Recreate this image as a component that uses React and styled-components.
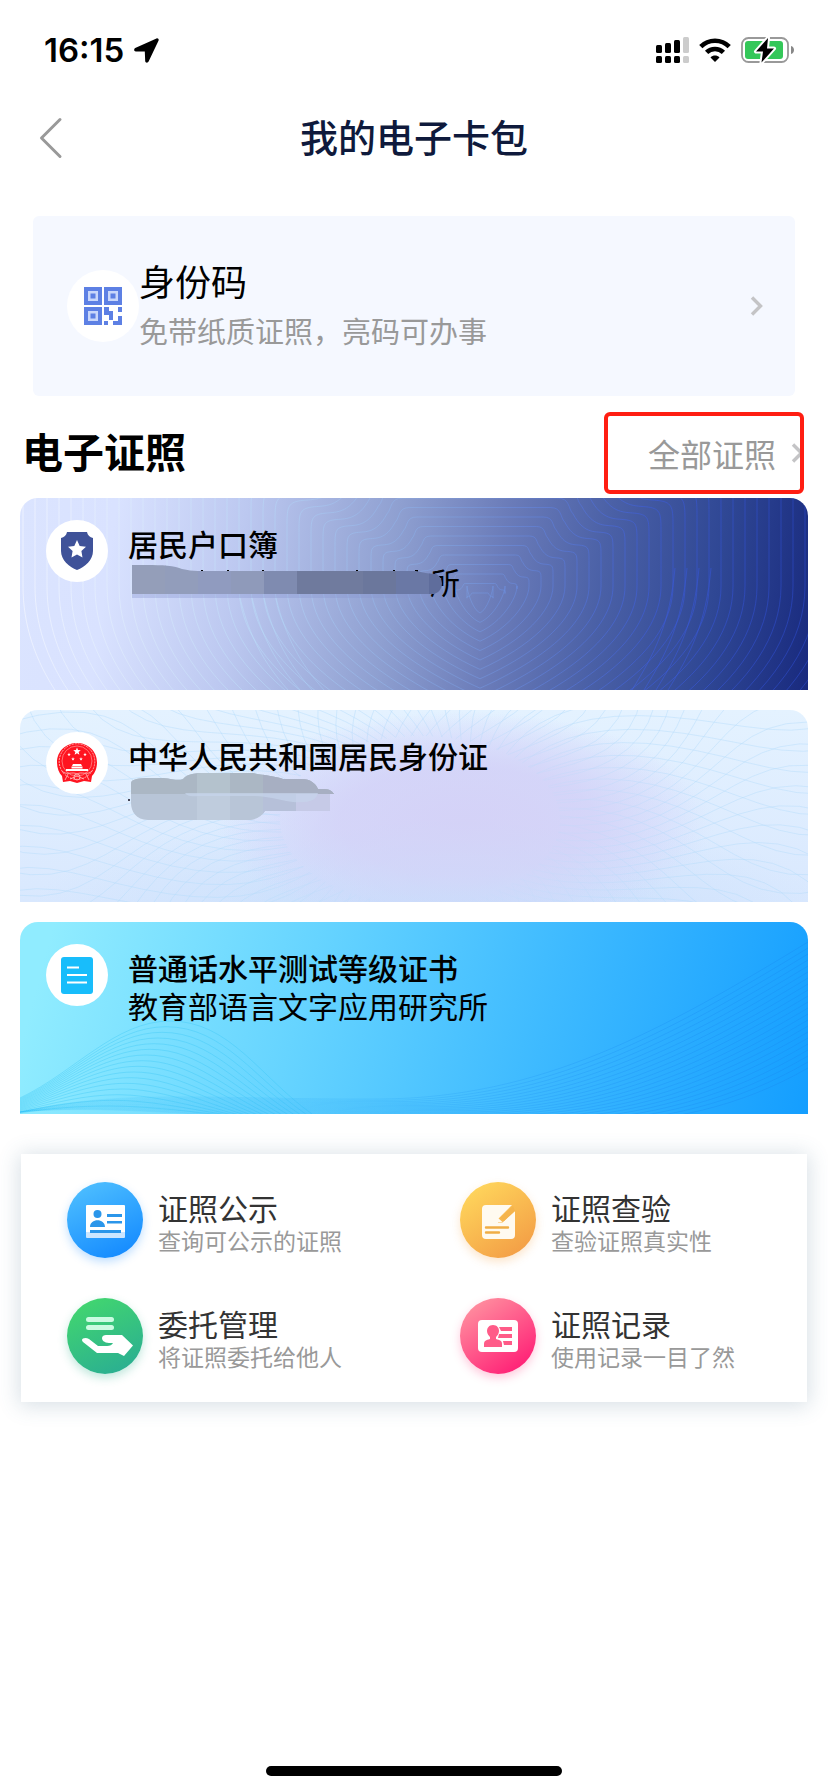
import React from "react";
import styled, { createGlobalStyle } from "styled-components";

const GlobalStyle = createGlobalStyle`
  * { box-sizing: border-box; }
  body {
    margin: 0;
    background: #fff;
    color: #000;
    font-family: "Noto Sans CJK SC", "Liberation Sans", sans-serif;
  }
  h1, h2, h3, p { margin: 0; }
  a { color: inherit; text-decoration: none; }
`;

const Screen = styled.div`
  display: flex;
  flex-direction: column;
  min-height: 100vh;
`;

const StatusBar = styled.header`
  display: flex;
  align-items: center;
  justify-content: space-between;
  height: 92px;
  padding: 8px 34px 0 44px;
`;

const StatusGroup = styled.div`
  display: flex;
  align-items: center;
  gap: 10px;
`;

const Clock = styled.time`
  font: 600 33px/40px Inter, "Liberation Sans", sans-serif;
`;

const NavBar = styled.nav`
  display: grid;
  grid-template-columns: 64px 1fr 64px;
  align-items: center;
  height: 92px;
  padding: 0 24px;
`;

const BackButton = styled.button`
  display: flex;
  align-items: center;
  height: 64px;
  padding: 0 0 0 15px;
  border: 0;
  background: none;
  cursor: pointer;
`;

const PageTitle = styled.h1`
  padding-bottom: 4px;
  color: #0f1a3c;
  font-size: 38px;
  font-weight: 500;
  line-height: 52px;
  text-align: center;
`;

const CodeCard = styled.a`
  display: flex;
  align-items: center;
  min-height: 180px;
  margin: 32px 33px 0;
  padding: 0 32px 0 34px;
  border-radius: 6px;
  background: #f5f8ff;
`;

const RoundIcon = styled.span`
  display: flex;
  flex: none;
  align-items: center;
  justify-content: center;
  width: ${(p) => p.$size}px;
  height: ${(p) => p.$size}px;
  border-radius: 50%;
  background: #fff;
`;

const CodeText = styled.div`
  flex: 1;
  padding-bottom: 2px;
`;

const CodeTitle = styled.h2`
  font-size: 36px;
  font-weight: 400;
  line-height: 50px;
`;

const CodeHint = styled.p`
  color: #999;
  font-size: 29px;
  line-height: 50px;
`;

const SectionHead = styled.div`
  display: flex;
  align-items: center;
  justify-content: space-between;
  padding: 16px 24px 4px 22px;
`;

const SectionTitle = styled.h2`
  padding-bottom: 6px;
  font-size: 41px;
  font-weight: 700;
  line-height: 60px;
`;

const AllLink = styled.a`
  display: flex;
  align-items: center;
  gap: 15px;
  width: 200px;
  height: 82px;
  padding-left: 40px;
  overflow: hidden;
  border: 4px solid #ff1e12;
  border-radius: 6px;
  color: #999;
  font-size: 32px;
  line-height: 44px;
  white-space: nowrap;

  svg { flex: none; }
`;

const CardList = styled.main`
  display: flex;
  flex-direction: column;
  gap: 20px;
  padding: 0 20px;
`;

const LicenseCard = styled.a`
  position: relative;
  display: flex;
  align-items: flex-start;
  gap: 20px;
  min-height: 192px;
  padding: 22px 26px;
  overflow: hidden;
  border-radius: 18px 18px 0 0;
  background: ${(p) => p.$background};
`;

const Backdrop = styled.svg`
  position: absolute;
  inset: 0;
  width: 100%;
  height: 100%;
`;

const CardIcon = styled(RoundIcon)`
  position: relative;
`;

const CardText = styled.div`
  position: relative;
  padding-top: 4px;
`;

const CardTitle = styled.h3`
  font-size: 30px;
  font-weight: 500;
  line-height: 38px;
`;

const CardIssuer = styled.p`
  min-height: 38px;
  padding-left: ${(p) => p.$hidden || 0}px;
  font-size: 30px;
  line-height: 38px;
`;

const Redaction = styled.svg`
  position: absolute;
  top: 41px;
  left: 0;
`;

const ServicePanel = styled.section`
  display: grid;
  grid-template-columns: 1fr 1fr;
  row-gap: 40px;
  margin: 40px 21px 0;
  padding: 28px 0;
  background: #fff;
  box-shadow: 0 2px 20px 2px rgba(60, 100, 130, 0.2);
`;

const Service = styled.a`
  display: flex;
  align-items: center;
  gap: 15px;
  padding-left: 46px;
`;

const ServiceIcon = styled.span`
  width: 76px;
  height: 76px;
  border-radius: 50%;
  background: ${(p) => p.$background};
  box-shadow: 0 4px 10px ${(p) => p.$glow};
`;

const ServiceText = styled.div`
  padding-top: 4px;
`;

const ServiceTitle = styled.h3`
  color: #333;
  font-size: 30px;
  font-weight: 400;
  line-height: 36px;
`;

const ServiceHint = styled.p`
  color: #999;
  font-size: 23px;
  line-height: 30px;
`;

const HomeBar = styled.div`
  width: 296px;
  height: 10px;
  margin: auto auto 16px;
  border-radius: 5px;
  background: #000;
`;

const LocationArrow = () => (
  <svg width="25" height="25" viewBox="0 0 25 25" aria-hidden="true">
    <path d="M22.500 .4 1.200 10C-.5 10.900 0 13.300 1.800 13.400L10.800 13.600 11.200 23C11.300 25 13.800 25.300 14.600 23.600L24.600 2.400C25 1.200 24 -.1 22.500 .4Z" />
  </svg>
);

const Signal = () => (
  <svg width="33" height="26" viewBox="0 0 33 26" aria-hidden="true">
    {[8, 10, 13, 16].map((h, i) => (
      <g key={h} fill={i === 3 ? "#ccc" : "#000"}>
        <rect x={i * 9} y={16 - h} width="6" height={h} rx="1.500" />
        <rect x={i * 9} y="19" width="6" height="7" rx="1.500" />
      </g>
    ))}
  </svg>
);

const Wifi = () => (
  <svg width="32" height="24" viewBox="0 0 32 24" aria-hidden="true">
    <g fill="none" stroke="#000" strokeWidth="4.600">
      <path d="M1.800 8.600C9.600 .7 22.400 .7 30.200 8.600" />
      <path d="M7.600 14.400C12.200 9.800 19.800 9.800 24.400 14.400" />
    </g>
    <path d="M16 24 11.500 19.400C14 17 18 17 20.500 19.400Z" />
  </svg>
);

const Battery = () => (
  <svg width="53" height="26" viewBox="0 0 53 26" aria-hidden="true">
    <rect x="1" y="1" width="46" height="24" rx="6.500" fill="none" stroke="#999" strokeWidth="1.800" />
    <rect x="4" y="4" width="38" height="18" rx="3" fill="#34c759" />
    <path d="M50 9C54 10 54 16 50 17Z" fill="#888" />
    <path d="M27 1 15 14.500H22L20.500 25.500 33 11.500H26Z" stroke="#fff" strokeWidth="4" strokeLinejoin="round" />
    <path d="M27 1 15 14.500H22L20.500 25.500 33 11.500H26Z" />
  </svg>
);

const Chevron = () => (
  <svg width="13" height="20" viewBox="0 0 13 20" fill="none" aria-hidden="true">
    <path d="M2 1.500 10.500 10 2 18.500" stroke="#c4c4c6" strokeWidth="3.400" />
  </svg>
);

const QrIcon = () => (
  <svg width="38" height="38" viewBox="0 0 38 38" aria-hidden="true">
    {[[0, 0], [20, 0], [0, 20]].map(([x, y]) => (
      <g key={`${x}-${y}`} transform={`translate(${x} ${y})`}>
        <rect width="18" height="18" fill="#5d80e4" />
        <rect x="4" y="4" width="10" height="10" fill="#c9d7fb" />
        <rect x="6.500" y="6.500" width="5" height="5" fill="#5d80e4" />
      </g>
    ))}
    <path fill="#5d80e4" d="M20 20h5v4h4v9h-4v-5h-5zM34 20h4v5h-4zM20 34h4v4h-4zM34 29h4v9h-9v-4h5z" />
  </svg>
);

const ShieldIcon = () => (
  <svg width="32" height="38" viewBox="0 0 32 38" aria-hidden="true">
    <path fill="#3f5299" d="M6 0H26C26.500 3 29 5.500 32 6V19C32 28 24 35 16 38 8 35 0 28 0 19V6C3 5.500 5.500 3 6 0Z" />
    <path fill="#fff" d="m16 8 2.700 5.900 6.300.8-4.600 4.400 1.100 6.400L16 22.400l-5.500 3.100 1.100-6.400L7 14.700l6.300-.8z" />
  </svg>
);

const star = (cx, cy, r) =>
  Array.from({ length: 10 }, (_, i) => {
    const a = (Math.PI * i) / 5 - Math.PI / 2;
    const d = i % 2 ? r * 0.42 : r;
    return `${(cx + d * Math.cos(a)).toFixed(1)},${(cy + d * Math.sin(a)).toFixed(1)}`;
  }).join(" ");

const EmblemIcon = () => (
  <svg width="40" height="40" viewBox="0 0 40 40" aria-hidden="true">
    <path fill="#ff1420" d="M20 0C31 0 40 8 40 19.500 40 25 38 30 35 33L34 39 27 38 20 40 13 38 6 39 5 33C2 30 0 25 0 19.500 0 8 9 0 20 0Z" />
    <circle cx="20" cy="18.500" r="17.800" fill="none" stroke="#ffb0b0" strokeWidth="1" strokeDasharray="2 1" />
    <circle cx="20" cy="18" r="15" fill="none" stroke="#ff9c9c" strokeWidth=".7" />
    <g fill="#fff">
      <polygon points={star(20, 8.500, 4)} />
      <polygon points={star(12, 11.500, 1.900)} />
      <polygon points={star(28, 11.500, 1.900)} />
      <polygon points={star(16, 16, 1.900)} />
      <polygon points={star(24, 16, 1.900)} />
      <path d="M16 21h8l1 2H15zM14.500 23.500h11v2h-11zM9 26h22v2H9z" />
    </g>
    <g fill="none" stroke="#ffc0c0" strokeWidth=".8">
      <path d="M5 28C10 33 15 28 20 31 25 28 30 33 35 28M8 37 11 31M32 37 29 31M13 36 20 33 27 36" />
      <circle cx="20" cy="34" r="3" />
    </g>
  </svg>
);

const DocumentIcon = () => (
  <svg width="32" height="37" viewBox="0 0 32 37" aria-hidden="true">
    <rect width="32" height="37" rx="3" fill="#18bdfb" />
    <path d="M6 10.500H18M6 18H26M6 25.500H26" stroke="#fff" strokeWidth="2" />
  </svg>
);

const ringPath = (k) => {
  const w = 13 + 12 * k;
  const t = 95 - 9.500 * k;
  const b = 115 + 9.400 * k;
  const cx = 460;
  const half = (s) => [
    `${cx + s * w * 0.58} ${t}`,
    `${cx + s * w * 0.68} ${t} ${cx + s * w * 0.66} ${t + w * 0.08} ${cx + s * w * 0.7} ${t + w * 0.12}`,
    `${cx + s * w * 0.78} ${t + w * 0.27} ${cx + s * w * 0.86} ${t + w * 0.25} ${cx + s * w * 0.93} ${t + w * 0.26}`,
    `${cx + s * w} ${t + w * 0.27} ${cx + s * w} ${t + w * 0.3} ${cx + s * w} ${t + w * 0.4}`,
    `${cx + s * w} ${88 + w * 0.34} ${cx + s * w * 0.58} ${b - w * 0.26} ${cx} ${b}`,
  ];
  return [1, -1]
    .map((s) => {
      const [p0, c1, c2, c3, c4] = half(s);
      return `M${cx} ${t}L${p0}C${c1}C${c2}C${c3}L${cx + s * w} 88C${c4}`;
    })
    .join("");
};

const Contours = () => (
  <Backdrop viewBox="0 0 788 192" preserveAspectRatio="none" aria-hidden="true">
    <defs>
      <linearGradient id="contour" gradientUnits="userSpaceOnUse" x1="0" x2="788" y1="0" y2="0">
        <stop offset="0" stopColor="#fff" stopOpacity=".5" />
        <stop offset=".3" stopColor="#b9daf8" stopOpacity=".6" />
        <stop offset=".55" stopColor="#7ea4e6" stopOpacity=".5" />
        <stop offset=".8" stopColor="#3c5cdc" stopOpacity=".6" />
        <stop offset="1" stopColor="#2a48c8" stopOpacity=".6" />
      </linearGradient>
    </defs>
    <g fill="none" stroke="url(#contour)">
      {Array.from({ length: 38 }, (_, k) => <path key={k} d={ringPath(k)} />)}
      {[0, 1, 2, 3].map((k) => (
        <path key={k} d={`M${655 + k * 12} 70C${650 + k * 12} 125 ${635 + k * 12} 155 ${612 + k * 12} 192M${220 + k * 12} 100C${230 + k * 12} 140 ${244 + k * 12} 165 ${268 + k * 12} 192`} />
      ))}
    </g>
  </Backdrop>
);

const rayPath = (i, count, phase) => {
  const base = (2 * Math.PI * i) / count;
  const points = [];
  for (let r = 0.35; r <= 1.7; r += 0.05) {
    const a = base + phase * 0.24 * Math.sin(r * 5 + base);
    points.push(`${(400 + 400 * r * Math.cos(a)).toFixed(1)} ${(110 + 240 * r * Math.sin(a)).toFixed(1)}`);
  }
  return `M${points.join("L")}`;
};

const Guilloche = () => (
  <Backdrop viewBox="0 0 788 192" preserveAspectRatio="none" aria-hidden="true">
    <defs>
      <radialGradient id="glow">
        <stop offset="0" stopColor="#d4d2f7" />
        <stop offset=".5" stopColor="#d4d4f8" stopOpacity=".9" />
        <stop offset="1" stopColor="#d4d8fb" stopOpacity="0" />
      </radialGradient>
      <radialGradient id="pool">
        <stop offset="0" stopColor="#c8defb" />
        <stop offset="1" stopColor="#c8defb" stopOpacity="0" />
      </radialGradient>
    </defs>
    <ellipse cx="410" cy="200" rx="400" ry="100" fill="url(#pool)" />
    <ellipse cx="445" cy="112" rx="250" ry="110" fill="url(#glow)" />
    <g fill="none" stroke="#b4dcfa" strokeOpacity=".45">
      {Array.from({ length: 72 }, (_, i) => (
        <path key={i} d={rayPath(i, 72, 1) + rayPath(i, 72, -1)} />
      ))}
    </g>
    <ellipse cx="430" cy="200" rx="230" ry="90" fill="url(#pool)" />
    <ellipse cx="440" cy="110" rx="240" ry="110" fill="url(#glow)" opacity=".7" />
  </Backdrop>
);

const blend = (a, b, count) =>
  Array.from({ length: count }, (_, i) => {
    const t = i / (count - 1);
    const p = a.map((v, j) => (v + (b[j] - v) * t).toFixed(1));
    return `M${p[0]} ${p[1]}C${p.slice(2, 8).join(" ")}C${p.slice(8).join(" ")}`;
  });

const hills = blend(
  [0, 176, 55, 150, 95, 99, 150, 99, 210, 99, 240, 155, 292, 192],
  [0, 191, 30, 186, 60, 184, 90, 184, 120, 184, 160, 188, 200, 193],
  16
);
const slopes = blend(
  [0, 190, 100, 166, 200, 178, 360, 177, 520, 176, 640, 110, 788, 20],
  [0, 190, 120, 180, 240, 205, 560, 204, 650, 200, 720, 185, 788, 146],
  22
);

const Waves = () => (
  <Backdrop viewBox="0 0 788 192" preserveAspectRatio="none" fill="none" aria-hidden="true">
    <defs>
      <linearGradient id="slope" gradientUnits="userSpaceOnUse" x1="0" x2="788" y1="0" y2="0">
        <stop offset="0" stopColor="#2fc0f4" stopOpacity=".08" />
        <stop offset=".3" stopColor="#25a8f4" stopOpacity=".16" />
        <stop offset=".7" stopColor="#1686f0" stopOpacity=".24" />
        <stop offset="1" stopColor="#1686f0" stopOpacity=".34" />
      </linearGradient>
    </defs>
    <g stroke="#2fc0f4" strokeOpacity=".32">
      {hills.map((d) => <path key={d} d={d} />)}
    </g>
    <g stroke="url(#slope)">
      {slopes.map((d) => <path key={d} d={d} />)}
    </g>
  </Backdrop>
);

const barTones = ["#949eb9", "#929dbb", "#909bbf", "#8f9aba", "#7f8bb0", "#6f7a9d", "#707b9e", "#6b779c", "#6a78a5", "#5f6d9c"];

const BarRedaction = () => (
  <Redaction width="316" height="42" viewBox="0 0 316 42" aria-hidden="true">
    <defs>
      <clipPath id="bar">
        <path d="M4 4C20 4 45 3 54 8 60 9 64 10 70 10H288C296 12 303 13 308 13 317 17 316 33 303 33H4Z" />
      </clipPath>
    </defs>
    <path d="M73 9h2v2h-2zM99 9h2v2h-2zM134 9h2v2h-2zM228 9h2v2h-2zM265 9h2v2h-2zM287 9h3v2h-3z" />
    <g clipPath="url(#bar)">
      {barTones.map((c, i) => (
        <rect key={c} x={4 + i * 33} y="0" width="33.500" height="40" fill={c} />
      ))}
    </g>
    <rect x="4" y="33" width="296" height="4" fill="#8895cf" opacity=".35" />
  </Redaction>
);

const CloudRedaction = () => (
  <Redaction width="206" height="48" viewBox="0 0 206 48" aria-hidden="true">
    <rect x="0" y="26" width="2" height="2" fill="#445" />
    <defs>
      <clipPath id="cloud">
        <path d="M3 24V10C3 6 12 5 20 5H35C46 6 50 8 55 6 60 0 68 0 84 0H125C132 2 148 3 155 6H173C183 6 188 11 190 16H196C202 16 205 19 206 21H202V38H137C133 44 128 47 120 47H20C8 47 3 38 3 30Z" />
      </clipPath>
    </defs>
    <g clipPath="url(#cloud)">
      <rect width="206" height="48" fill="#b8c5d7" />
      <rect x="69" width="33" height="48" fill="#bfccdd" />
      <rect x="135" y="20" width="33" height="28" fill="#b6c0d9" />
      <rect x="168" y="20" width="38" height="28" fill="#c6cae7" />
      <path d="M3 0H206V21H3Z" fill="#abb7c4" />
      <path d="M69 0H102V21H69Z" fill="#b4c2cd" />
      <path d="M135 0H206V21H135Z" fill="#a7afc2" />
      <path d="M57 20H190C188 28 180 30 165 29 150 27 140 23 125 23H70C62 24 58 22 57 20Z" fill="#c6d4eb" opacity=".7" />
    </g>
  </Redaction>
);

const PublicIcon = () => (
  <svg width="76" height="76" viewBox="0 0 76 76" aria-hidden="true">
    <path fill="#fff" d="M19 24q0-1 1-1h37q1 0 1 1v27H19z" />
    <path fill="#cce6ff" d="M19 50h39v5q0 1-1 1H20q-1 0-1-1z" />
    <g fill="#2b96ea">
      <circle cx="30.500" cy="32" r="4" />
      <path d="M23 45c0-9 15-9 15 0zM40 32h15v3H40zM40 39h15v2.500H40zM23 48h31v3H23z" />
    </g>
  </svg>
);

const VerifyIcon = () => (
  <svg width="76" height="76" viewBox="0 0 76 76" aria-hidden="true">
    <path fill="#fffaf0" d="M26 23H52L38 37V41H42L55 29V53Q55 57 51 57H26Q22 57 22 53V27Q22 23 26 23Z" />
    <path fill="#f5b44c" d="M40 36 53 24 55 29 44 39Z" />
    <path fill="#fffaf0" d="m38 36 5 4.500H38z" />
    <path d="M26 45.500H48M26 50.500H39" stroke="#f0ad45" strokeWidth="2.400" strokeLinecap="round" />
  </svg>
);

const EntrustIcon = () => (
  <svg width="76" height="76" viewBox="0 0 76 76" aria-hidden="true">
    <rect x="19" y="19" width="28" height="5" rx="2.500" fill="#cbfbe2" />
    <rect x="19" y="27" width="28" height="5" rx="2.500" fill="#cbfbe2" />
    <path fill="#fff" d="M15 42C15 40 19 39 22 41L31 48H40C43 48 45 47 46 45 40 45.500 35 44 35 40 35 38 37 37 39 37H55L66 47.500 57 58 51 55H30L16 44Q15 43 15 42Z" />
  </svg>
);

const RecordIcon = () => (
  <svg width="76" height="76" viewBox="0 0 76 76" aria-hidden="true">
    <rect x="18" y="22" width="40" height="32" rx="4" fill="#fff" />
    <g fill="#ff5b88">
      <path d="M33 27C37 27 39 30 39 33 39 36 37 38 36 39V41C40 42 42 43 42 46V49H24V46C24 43 26 42 30 41V39C29 38 27 36 27 33 27 30 29 27 33 27Z" />
      <path d="M39 29H52V33H41ZM39 36H52V40H38ZM43 43H52V47H44Z" />
    </g>
  </svg>
);

const licenses = [
  {
    title: "居民户口簿",
    issuer: "所",
    hidden: 302,
    icon: <ShieldIcon />,
    backdrop: <Contours />,
    cover: <BarRedaction />,
    background:
      "linear-gradient(98deg, #dbe4ff 0%, #d9e2ff 12%, #bcc8f0 28%, #8e9fd0 47%, #6b7cb9 60%, #4a60a6 73%, #2f4794 87%, #192a7e 100%)",
  },
  {
    title: "中华人民共和国居民身份证",
    issuer: "",
    icon: <EmblemIcon />,
    backdrop: <Guilloche />,
    cover: <CloudRedaction />,
    background: "linear-gradient(180deg, #e4f2ff, #d9e8fe)",
  },
  {
    title: "普通话水平测试等级证书",
    issuer: "教育部语言文字应用研究所",
    icon: <DocumentIcon />,
    backdrop: <Waves />,
    background: "linear-gradient(105deg, #90ecff 4%, #66d4ff 36%, #3ebaff 66%, #149eff 100%)",
  },
];

const services = [
  { title: "证照公示", hint: "查询可公示的证照", icon: <PublicIcon />, background: "linear-gradient(155deg, #4dbeff 8%, #148aff 92%)", glow: "rgba(30, 140, 255, .28)" },
  { title: "证照查验", hint: "查验证照真实性", icon: <VerifyIcon />, background: "linear-gradient(145deg, #ffd75c 8%, #f39c45 92%)", glow: "rgba(245, 160, 70, .28)" },
  { title: "委托管理", hint: "将证照委托给他人", icon: <EntrustIcon />, background: "linear-gradient(155deg, #42d66f 8%, #2aae92 92%)", glow: "rgba(45, 175, 140, .3)" },
  { title: "证照记录", hint: "使用记录一目了然", icon: <RecordIcon />, background: "linear-gradient(145deg, #ff92a0 8%, #ff1b74 92%)", glow: "rgba(255, 60, 130, .28)" },
];

export default function App() {
  return (
    <Screen>
      <GlobalStyle />
      <StatusBar>
        <StatusGroup>
          <Clock>16:15</Clock>
          <LocationArrow />
        </StatusGroup>
        <StatusGroup>
          <Signal />
          <Wifi />
          <Battery />
        </StatusGroup>
      </StatusBar>
      <NavBar>
        <BackButton type="button" aria-label="返回">
          <svg width="24" height="42" viewBox="0 0 24 42" fill="none" stroke="#999" strokeWidth="3" strokeLinecap="round" strokeLinejoin="round">
            <path d="M21 2.500 2.500 21 21 39.500" />
          </svg>
        </BackButton>
        <PageTitle>我的电子卡包</PageTitle>
      </NavBar>
      <CodeCard href="#code">
        <RoundIcon $size={72}><QrIcon /></RoundIcon>
        <CodeText>
          <CodeTitle>身份码</CodeTitle>
          <CodeHint>免带纸质证照，亮码可办事</CodeHint>
        </CodeText>
        <Chevron />
      </CodeCard>
      <SectionHead>
        <SectionTitle>电子证照</SectionTitle>
        <AllLink href="#all">
          全部证照
          <Chevron />
        </AllLink>
      </SectionHead>
      <CardList>
        {licenses.map((l) => (
          <LicenseCard key={l.title} href="#license" $background={l.background}>
            {l.backdrop}
            <CardIcon $size={62}>{l.icon}</CardIcon>
            <CardText>
              <CardTitle>{l.title}</CardTitle>
              <CardIssuer $hidden={l.hidden}>{l.issuer}</CardIssuer>
              {l.cover}
            </CardText>
          </LicenseCard>
        ))}
      </CardList>
      <ServicePanel>
        {services.map((s) => (
          <Service key={s.title} href="#service">
            <ServiceIcon $background={s.background} $glow={s.glow}>{s.icon}</ServiceIcon>
            <ServiceText>
              <ServiceTitle>{s.title}</ServiceTitle>
              <ServiceHint>{s.hint}</ServiceHint>
            </ServiceText>
          </Service>
        ))}
      </ServicePanel>
      <HomeBar />
    </Screen>
  );
}
